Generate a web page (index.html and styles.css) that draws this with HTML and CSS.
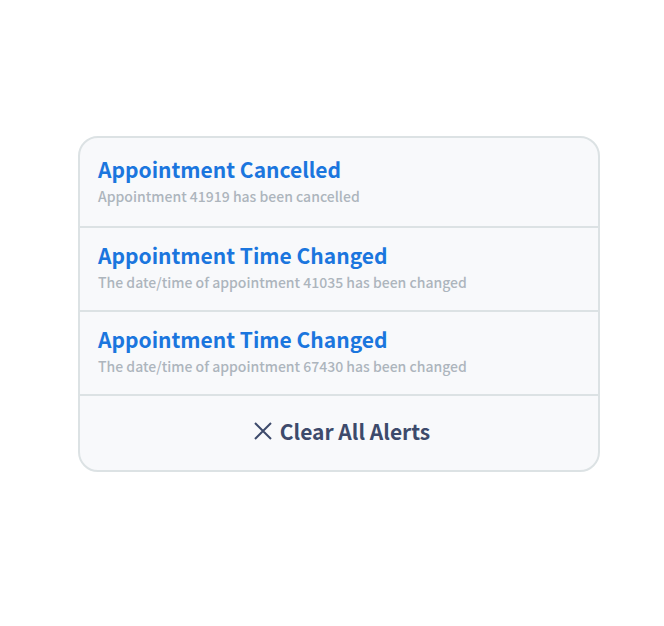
FILE: index.html
```html
<!DOCTYPE html>
<html lang="en">
<head>
<meta charset="utf-8">
<meta name="viewport" content="width=device-width, initial-scale=1">
<title>Alerts</title>
<link rel="stylesheet" href="styles.css">
</head>
<body>
<main class="alerts">
  <ul class="alert-list">
    <li class="alert">
      <a class="alert-title" href="#">Appointment Cancelled</a>
      <p class="alert-text">Appointment 41919 has been cancelled</p>
    </li>
    <li class="alert">
      <a class="alert-title" href="#">Appointment Time Changed</a>
      <p class="alert-text">The date/time of appointment 41035 has been changed</p>
    </li>
    <li class="alert">
      <a class="alert-title" href="#">Appointment Time Changed</a>
      <p class="alert-text">The date/time of appointment 67430 has been changed</p>
    </li>
  </ul>
  <button class="clear" type="button">
    <svg class="clear-icon" viewBox="0 0 18 18" aria-hidden="true"><path d="M1 1 17 17M17 1 1 17"/></svg>
    Clear All Alerts
  </button>
</main>
</body>
</html>
```
FILE: styles.css
```css
* {
  box-sizing: border-box;
}

body {
  margin: 0;
  padding: 136px 64px 136px 78px;
  background: #fff;
  font-family: "Noto Sans CJK SC", "Noto Sans", sans-serif;
}

.alerts {
  border: 2px solid #dce2e4;
  border-radius: 20px;
  background: #f8f9fb;
  overflow: hidden;
}

.alert-list {
  margin: 0;
  padding: 0;
  list-style: none;
}

.alert {
  padding: 12px 18px 16px;
  border-bottom: 2px solid #dce2e4;
}

.alert:first-child {
  padding-top: 16px;
  padding-bottom: 18px;
}

.alert-title {
  display: block;
  color: #1b76de;
  font-size: 21px;
  font-weight: 700;
  line-height: 30px;
  text-decoration: none;
}

.alert-text {
  margin: 0;
  color: #adb5bd;
  font-size: 14px;
  font-weight: 500;
  line-height: 24px;
}

.clear {
  display: flex;
  align-items: center;
  justify-content: center;
  gap: 8px;
  width: 100%;
  padding: 20px 0 24px 6px;
  border: 0;
  background: transparent;
  color: #3d4a6b;
  font: inherit;
  font-size: 21px;
  font-weight: 700;
  line-height: 30px;
}

.clear-icon {
  width: 18px;
  height: 18px;
  fill: none;
  stroke: currentColor;
  stroke-width: 2;
}
```
